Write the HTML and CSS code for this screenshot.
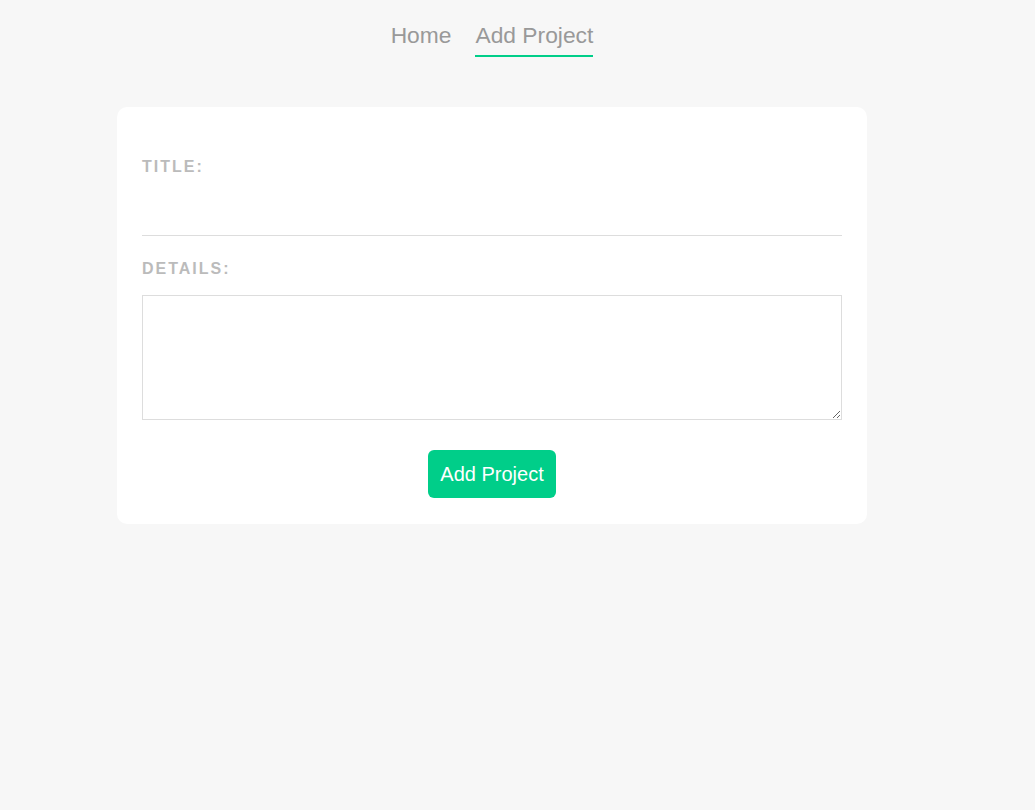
FILE: index.html
```html
<!DOCTYPE html>
<html lang="en">
<head>
<meta charset="utf-8">
<title>Add Project</title>
<link rel="stylesheet" href="styles.css">
</head>
<body>
<div class="page">
  <nav class="nav">
    <a class="nav-link" href="#">Home</a>
    <a class="nav-link active" href="#">Add Project</a>
  </nav>
  <form class="card">
    <label class="label" for="title">Title:</label>
    <input class="title-input" id="title" type="text">
    <label class="label" for="details">Details:</label>
    <textarea class="details-input" id="details"></textarea>
    <div class="actions">
      <button class="btn" type="button">Add Project</button>
    </div>
  </form>
</div>
</body>
</html>
```

FILE: styles.css
```css
html, body {
  margin: 0;
  padding: 0;
  background: #f7f7f7;
  font-family: "Liberation Sans", Arial, sans-serif;
}

.page {
  width: 984px;
}

.nav {
  display: flex;
  justify-content: center;
  gap: 24px;
  padding-top: 22px;
}

.nav-link {
  font-size: 22.8px;
  color: #999;
  text-decoration: none;
  padding-bottom: 6px;
  border-bottom: 2px solid transparent;
}

.nav-link.active {
  border-bottom-color: #00ce89;
}

.card {
  display: block;
  width: 750px;
  box-sizing: border-box;
  margin: 50px auto 0;
  background: #fff;
  border-radius: 10px;
  padding: 27px 25px 26px;
}

.label {
  display: block;
  margin: 24px 0 17px;
  font-size: 16px;
  font-weight: bold;
  letter-spacing: 2px;
  text-transform: uppercase;
  color: #bbb;
}

.title-input {
  display: block;
  width: 100%;
  box-sizing: border-box;
  height: 43px;
  border: none;
  border-bottom: 1px solid #ddd;
  outline: none;
  background: transparent;
  font-family: inherit;
  font-size: 16px;
  padding: 6px 0;
}

.details-input {
  display: block;
  width: 100%;
  box-sizing: border-box;
  height: 125px;
  border: 1px solid #ddd;
  margin: 0;
  padding: 6px;
  font-family: inherit;
  font-size: 16px;
  resize: both;
}

.actions {
  display: flex;
  justify-content: center;
  margin-top: 30px;
}

.btn {
  background: #00ce89;
  color: #fff;
  border: none;
  border-radius: 6px;
  font-family: inherit;
  font-size: 20px;
  line-height: 24px;
  padding: 12px;
  cursor: pointer;
}
```
